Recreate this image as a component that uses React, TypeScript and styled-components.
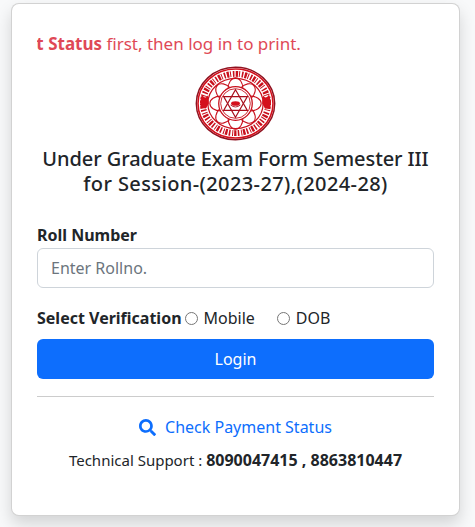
import { createGlobalStyle, styled } from "styled-components";
import { FaSearch } from "react-icons/fa";

const Global = createGlobalStyle`
  * { box-sizing: border-box; }
  html, body { margin: 0; padding: 0; }
  body {
    background: #f8f9fa;
    color: #212529;
    font-family: "Noto Sans", "Open Sans", sans-serif;
    font-size: 16px;
    line-height: 24px;
  }
`;
const Page = styled.div`
  width: 475px;
  height: 527px;
  padding: 3px 15px 11px 11px;
  overflow: hidden;
`;
const Card = styled.div`
  height: 513px;
  padding: 28px 25px 0;
  background: #fff;
  border: 1px solid rgba(0, 0, 0, 0.175);
  border-radius: 8px;
  box-shadow: 0 8px 16px rgba(0, 0, 0, 0.15);
`;
const Marquee = styled.div`
  height: 24px;
  overflow: hidden;
  white-space: nowrap;
  font-size: 17px;
  color: #dc3545;
  opacity: 0.9;
`;
const MarqueeText = styled.div`
  margin-left: -171px;
  strong { font-weight: 700; }
`;
const LogoWrap = styled.div`
  display: flex;
  justify-content: center;
  margin-top: 10px;
`;
const Title = styled.h1`
  margin: 5px 0 0;
  font-size: 20px;
  font-weight: 500;
  line-height: 25px;
  text-align: center;
`;
const TitleLine = styled.span<{ $spacing: number }>`
  display: block;
  white-space: nowrap;
  letter-spacing: ${(p) => p.$spacing}px;
`;
const Field = styled.div`
  margin-top: 27px;
`;
const Label = styled.label`
  display: block;
  font-weight: 700;
  line-height: 24px;
`;
const Input = styled.input`
  display: block;
  width: 100%;
  height: 40px;
  margin-top: 1px;
  padding: 6px 13px;
  font: inherit;
  color: #212529;
  background: #fff;
  border: 1px solid #ced4da;
  border-radius: 6px;
  outline: none;
  &::placeholder { color: #6c757d; opacity: 1; }
`;
const VerifyRow = styled.div`
  display: flex;
  align-items: center;
  height: 24px;
  margin-top: 18px;
`;
const VerifyLabel = styled.span`
  font-weight: 700;
  margin-right: 3px;
`;
const RadioLabel = styled.label<{ $gap: number }>`
  display: flex;
  align-items: center;
  margin-right: ${(p) => p.$gap}px;
`;
const Radio = styled.input`
  width: 13px;
  height: 13px;
  margin: 0 6px 0 0;
`;
const LoginButton = styled.button`
  display: block;
  width: 100%;
  height: 40px;
  margin-top: 9px;
  font: inherit;
  color: #fff;
  background: #0d6efd;
  border: 0;
  border-radius: 6px;
`;
const Divider = styled.hr`
  margin: 17px 0 16px;
  border: 0;
  border-top: 1px solid #ccc;
`;
const PayLink = styled.a`
  display: flex;
  align-items: center;
  justify-content: center;
  gap: 9px;
  height: 28px;
  color: #0d6efd;
  text-decoration: none;
`;
const Support = styled.p`
  margin: 7px 0 0;
  font-size: 15px;
  line-height: 24px;
  text-align: center;
  white-space: nowrap;
  strong { font-size: 16px; font-weight: 700; }
`;

const Logo = () => {
  const petals = [0, 45, 90, 135, 180, 225, 270, 315];
  return (
    <svg width="81" height="75" viewBox="0 0 82 76" aria-label="University seal">
      <ellipse cx="41" cy="38" rx="39.7" ry="36.7" fill="#fff" stroke="#8f1220" strokeWidth="1.5" />
      <ellipse cx="41" cy="38" rx="38" ry="35" fill="none" stroke="#d4101c" strokeWidth="1.6" />
      <ellipse cx="41" cy="38" rx="33" ry="30" fill="none" stroke="#c8101c" strokeWidth="6" strokeDasharray="1.6 1.3 2.4 1 1 1.8" />
      <ellipse cx="41" cy="38" rx="28" ry="25.5" fill="#fff" stroke="#c8101c" strokeWidth="1.2" />
      {petals.map((a) => (
        <ellipse
          key={a}
          cx="41"
          cy="23"
          rx="7.5"
          ry="11"
          fill="none"
          stroke="#c8101c"
          strokeWidth="1.1"
          transform={`rotate(${a} 41 38)`}
        />
      ))}
      <circle cx="41" cy="38" r="17" fill="#fff" stroke="#c8101c" strokeWidth="1.3" />
      <circle cx="41" cy="38" r="15" fill="none" stroke="#c8101c" strokeWidth="0.9" />
      <polygon points="41,24 53,45 29,45" fill="none" stroke="#a80f1c" strokeWidth="1.2" />
      <polygon points="41,52 53,31 29,31" fill="none" stroke="#a80f1c" strokeWidth="1.2" />
      <ellipse cx="41" cy="38" rx="4.5" ry="2.4" fill="#d4101c" />
      <path d="M36 39.5 q5 4 10 0" fill="none" stroke="#a80f1c" strokeWidth="0.9" />
      <path d="M5 37 l2 -8 3 4 3 -3 1 8 -3 5 -5 -1 z" fill="#d4101c" />
      <path d="M77 37 l-2 -8 -3 4 -3 -3 -1 8 3 5 5 -1 z" fill="#d4101c" />
    </svg>
  );
};

export default function App() {
  return (
    <Page>
      <Global />
      <Card>
        <Marquee>
          <MarqueeText>
            Please check Paymen<strong>t Status</strong> first, then log in to print.
          </MarqueeText>
        </Marquee>
        <LogoWrap>
          <Logo />
        </LogoWrap>
        <Title>
          <TitleLine $spacing={-0.08}>Under Graduate Exam Form Semester III</TitleLine>
          <TitleLine $spacing={0.4}>for Session-(2023-27),(2024-28)</TitleLine>
        </Title>
        <Field>
          <Label htmlFor="roll">Roll Number</Label>
          <Input id="roll" placeholder="Enter Rollno." />
        </Field>
        <VerifyRow>
          <VerifyLabel>Select Verification</VerifyLabel>
          <RadioLabel $gap={22}>
            <Radio type="radio" name="verify" />
            Mobile
          </RadioLabel>
          <RadioLabel $gap={0}>
            <Radio type="radio" name="verify" />
            DOB
          </RadioLabel>
        </VerifyRow>
        <LoginButton>Login</LoginButton>
        <Divider />
        <PayLink href="#status">
          <FaSearch size={17} />
          Check Payment Status
        </PayLink>
        <Support>
          Technical Support : <strong>8090047415 , 8863810447</strong>
        </Support>
      </Card>
    </Page>
  );
}
